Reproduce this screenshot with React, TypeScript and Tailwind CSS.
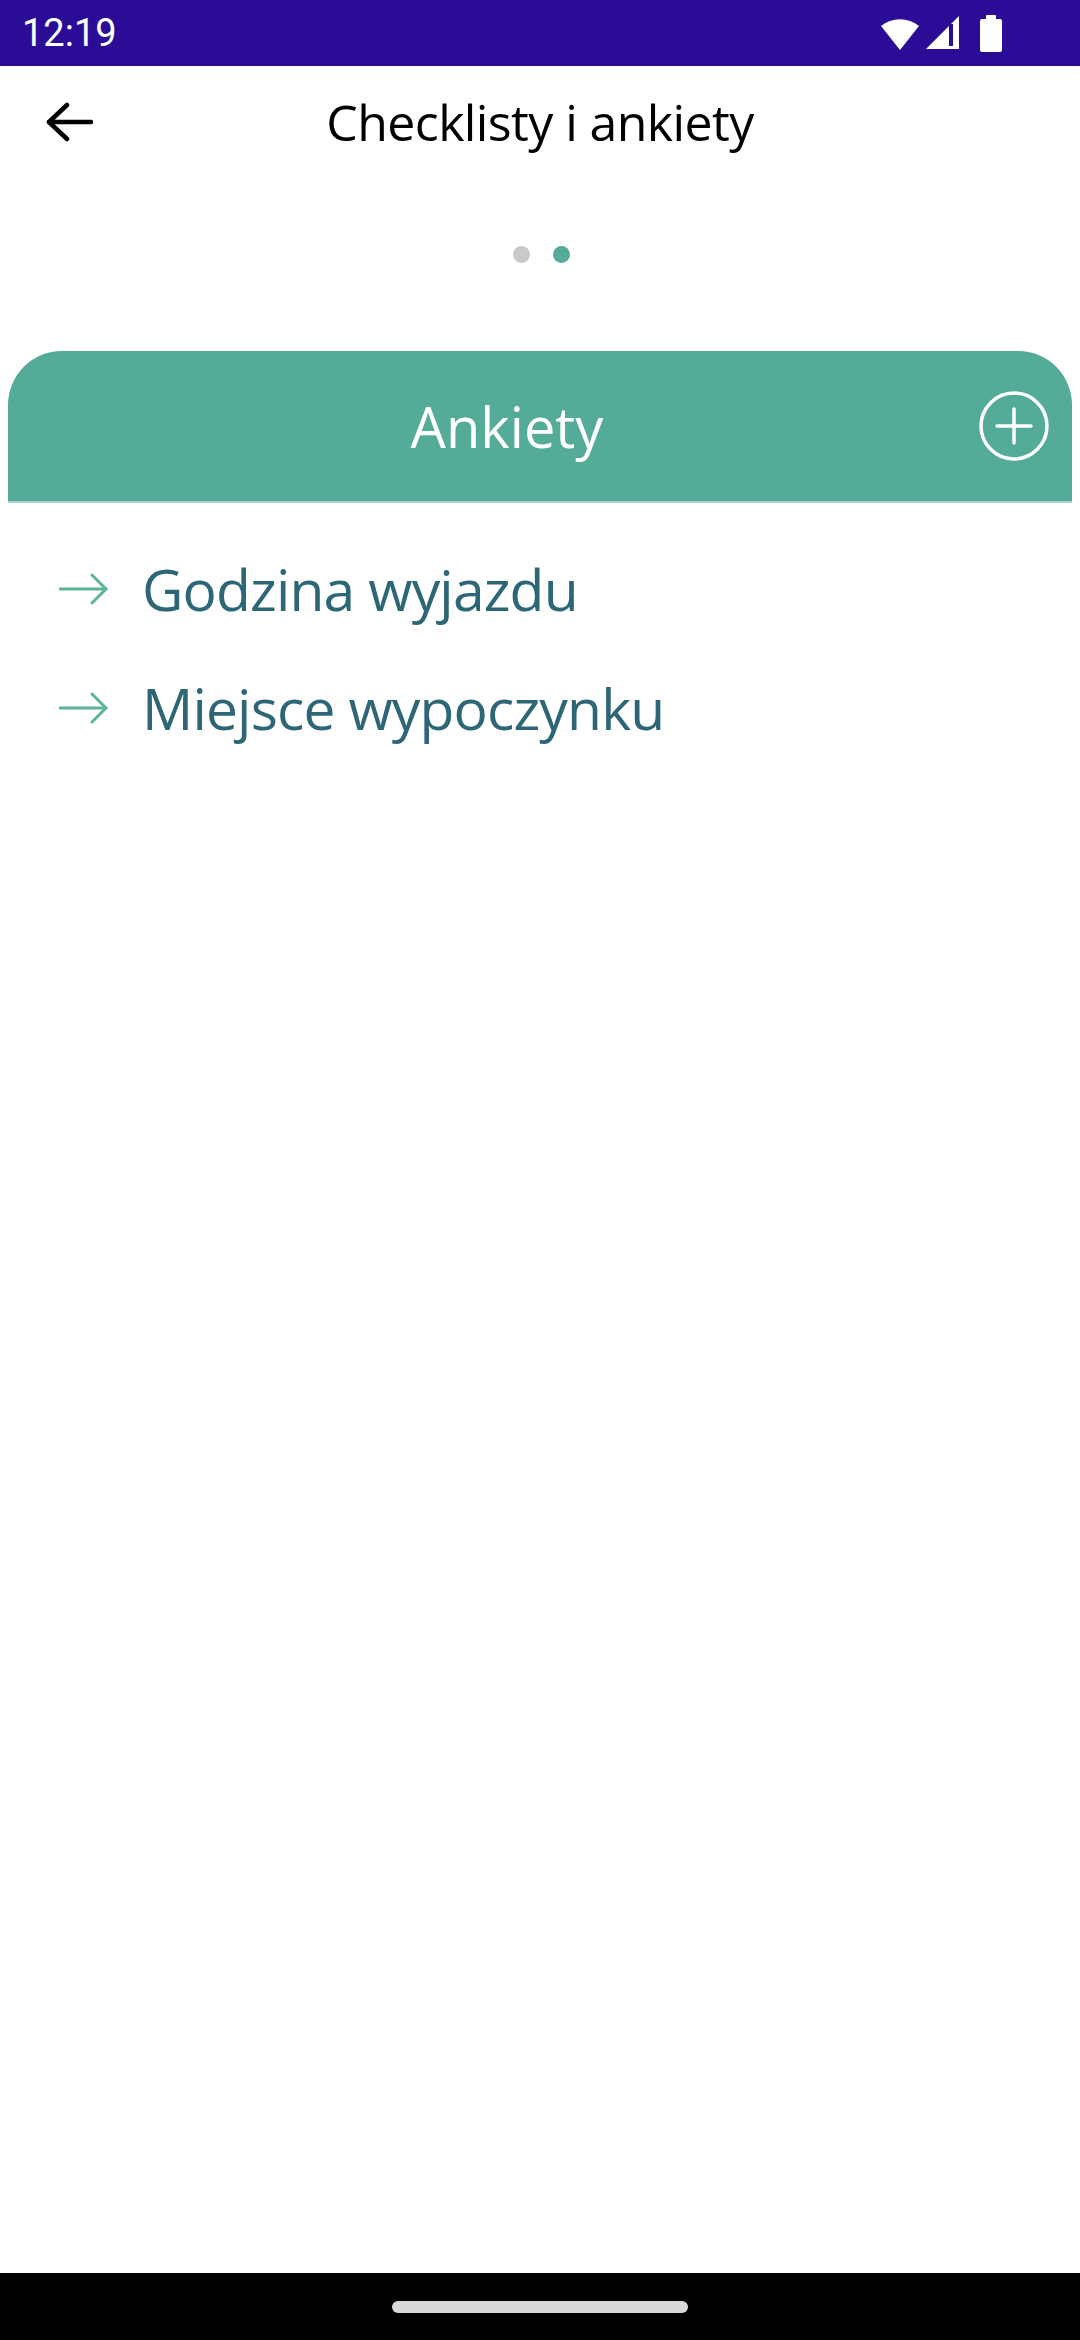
const items = ['Godzina wyjazdu', 'Miejsce wypoczynku'];

const BackArrow = () => (
    <svg width="48" height="40" viewBox="0 0 48 40" fill="none">
        <path d="M4 20 H46" stroke="#000" strokeWidth="4.5" strokeLinecap="round" />
        <path d="M22 3 L4 20 L22 37" stroke="#000" strokeWidth="4.5" strokeLinecap="round" strokeLinejoin="round" />
    </svg>
);

const RightArrow = () => (
    <svg width="50" height="32" viewBox="0 0 50 32" fill="none">
        <path d="M1 16 H47" stroke="#5db49a" strokeWidth="3" strokeLinecap="round" />
        <path d="M33 2 L47 16 L33 30" stroke="#5db49a" strokeWidth="3" strokeLinecap="round" strokeLinejoin="round" />
    </svg>
);

const PlusCircle = () => (
    <svg width="72" height="72" viewBox="0 0 72 72" fill="none">
        <circle cx="36" cy="36" r="33" stroke="#fff" strokeWidth="3.5" />
        <path d="M36 19 V53 M19 36 H53" stroke="#fff" strokeWidth="3.5" strokeLinecap="round" />
    </svg>
);

const StatusIcons = () => (
    <div className="flex items-center gap-[6px]">
        {/* wifi */}
        <svg width="40" height="34" viewBox="0 0 40 34">
            <path d="M20 34 L1 10 A30 30 0 0 1 39 10 Z" fill="#fff" />
        </svg>
        {/* signal */}
        <svg width="34" height="34" viewBox="0 0 34 34">
            <path d="M33 0 L33 33 L0 33 Z" fill="#fff" />
            <rect x="23" y="8" width="4" height="22" fill="#2b0c96" />
        </svg>
        {/* battery */}
        <svg width="22" height="37" viewBox="0 0 22 37" className="ml-[14px]">
            <rect x="6" y="0" width="10" height="5" rx="1" fill="#fff" />
            <rect x="0" y="4" width="22" height="33" rx="2" fill="#fff" />
        </svg>
    </div>
);

const App = () => {
    return (
        <div className="w-[1080px] h-[2340px] bg-white flex flex-col font-['Open_Sans',sans-serif]">
            {/* Status bar */}
            <div className="h-[66px] bg-[#2b0c96] flex items-center justify-between pl-[22px] pr-[78px]">
                <span className="text-white text-[38px] font-['Roboto',sans-serif] leading-none">12:19</span>
                <StatusIcons />
            </div>

            {/* Header */}
            <div className="relative h-[112px] flex items-center justify-center">
                <button className="absolute left-[45px] top-[36px]">
                    <BackArrow />
                </button>
                <h1 className="text-[50px] tracking-[-0.6px] text-black leading-none">Checklisty i ankiety</h1>
            </div>

            {/* Pager dots */}
            <div className="mt-[68px] flex justify-center gap-[23px] pl-[2px]">
                <span className="w-[17px] h-[17px] rounded-full bg-[#c9c9c9]" />
                <span className="w-[17px] h-[17px] rounded-full bg-[#53ab98]" />
            </div>

            {/* Card header */}
            <div className="mt-[88px] mx-[8px] h-[152px] bg-[#53ab98] rounded-t-[54px] border-b-[2px] border-[#a9d6cc] flex items-center pl-[28px] pr-[22px]">
                <div className="flex-1 text-center text-white text-[56px] leading-none">Ankiety</div>
                <PlusCircle />
            </div>

            {/* List */}
            <ul className="mt-[46px] flex flex-col gap-[39px]">
                {items.map((item) => (
                    <li key={item} className="flex items-center h-[80px] pl-[59px]">
                        <RightArrow />
                        <span className="ml-[33px] text-[57px] leading-[80px] font-medium tracking-[-0.85px] text-[#2d6676]">{item}</span>
                    </li>
                ))}
            </ul>

            <div className="flex-1" />

            {/* Navigation bar */}
            <div className="h-[67px] bg-black flex items-center justify-center">
                <span className="w-[296px] h-[12px] rounded-full bg-[#d8d8d8]" />
            </div>
        </div>
    );
};

export default App;
